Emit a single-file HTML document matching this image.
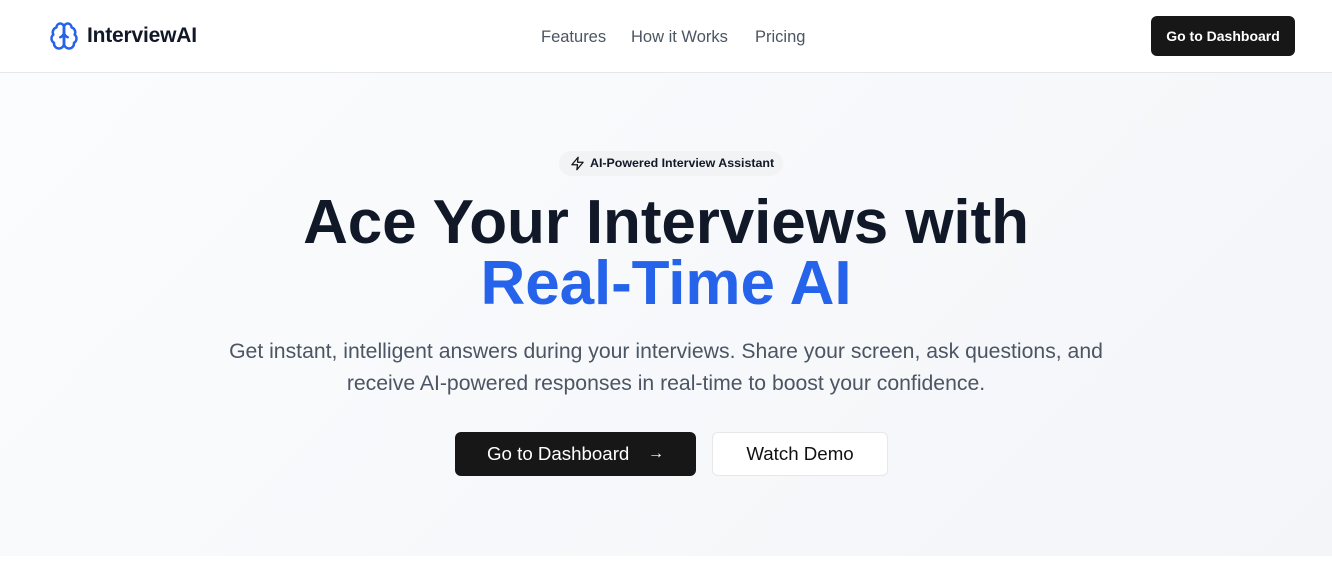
<!DOCTYPE html>
<html><head><style>
*{margin:0;padding:0;box-sizing:border-box}
body{width:1332px;height:576px;background:#fff;font-family:"Liberation Sans",sans-serif;overflow:hidden;position:relative}
.nav{position:absolute;top:0;left:0;width:1332px;height:73px;background:#fff;border-bottom:1px solid #e5e7eb}
.logo{position:absolute;left:49px;top:21px;display:flex;align-items:center;gap:8px;font-weight:bold;font-size:21px;color:#111827;letter-spacing:-0.2px}
.links{position:absolute;top:28px;left:541px;font-size:16.5px;color:#4b5563}
.links span{position:absolute;white-space:nowrap}
.nbtn{position:absolute;left:1151px;top:16px;width:144px;height:40px;background:#171717;color:#fff;border-radius:6px;font-size:14px;font-weight:bold;text-align:center;line-height:40px}
.hero{position:absolute;top:73px;left:0;width:1332px;height:483px;background:linear-gradient(135deg,#fbfcfd 0%,#f3f5f9 100%)}
.badge{position:absolute;left:559px;top:151px;width:224px;height:25px;background:#f1f3f5;border-radius:13px;font-size:12.4px;font-weight:bold;color:#111827;line-height:25px;padding-left:31px}
.badge svg{position:absolute;left:11px;top:5px}
h1{position:absolute;top:192px;left:0;width:1332px;text-align:center;font-size:62px;line-height:61px;font-weight:bold;color:#111827;letter-spacing:-0.1px}
h1 .b{color:#2563eb}
p{position:absolute;top:336px;left:0;width:1332px;text-align:center;font-size:21.2px;line-height:32px;color:#4b5563}
.b1{position:absolute;left:455px;top:432px;width:241px;height:44px;background:#171717;border-radius:6px;color:#fff;font-size:18.7px;line-height:44px;padding-left:32px}
.b1 span{position:absolute;left:193px;top:0;font-size:16px}
.b2{position:absolute;left:712px;top:432px;width:176px;height:44px;background:#fff;border:1px solid #e5e7eb;border-radius:6px;color:#111;font-size:18.7px;line-height:42px;text-align:center}
</style></head><body>
<div class="nav">
 <div class="logo"><svg width="30" height="30" viewBox="0 0 24 24" fill="none" stroke="#2563eb" stroke-width="2" stroke-linecap="round" stroke-linejoin="round"><path d="M12 5a3 3 0 1 0-5.997.125 4 4 0 0 0-2.526 5.77 4 4 0 0 0 .556 6.588A4 4 0 1 0 12 18Z"/><path d="M12 5a3 3 0 1 1 5.997.125 4 4 0 0 1 2.526 5.77 4 4 0 0 1-.556 6.588A4 4 0 1 1 12 18Z"/><path d="M15 13a4.5 4.5 0 0 1-3-4 4.5 4.5 0 0 1-3 4"/><path d="M12 5v13"/></svg>InterviewAI</div>
 <div class="links"><span style="left:0">Features</span><span style="left:90px">How it Works</span><span style="left:214px">Pricing</span></div>
 <div class="nbtn">Go to Dashboard</div>
</div>
<div class="hero"></div>
<div class="badge"><svg width="15" height="15" viewBox="0 0 24 24" fill="none" stroke="#111" stroke-width="2" stroke-linejoin="round"><path d="M13 2 3 14h9l-1 8 10-12h-9l1-8z"/></svg>AI-Powered Interview Assistant</div>
<h1>Ace Your Interviews with<br><span class="b">Real-Time AI</span></h1>
<p>Get instant, intelligent answers during your interviews. Share your screen, ask questions, and<br>receive AI-powered responses in real-time to boost your confidence.</p>
<div class="b1">Go to Dashboard<span>→</span></div>
<div class="b2">Watch Demo</div>
</body></html>
